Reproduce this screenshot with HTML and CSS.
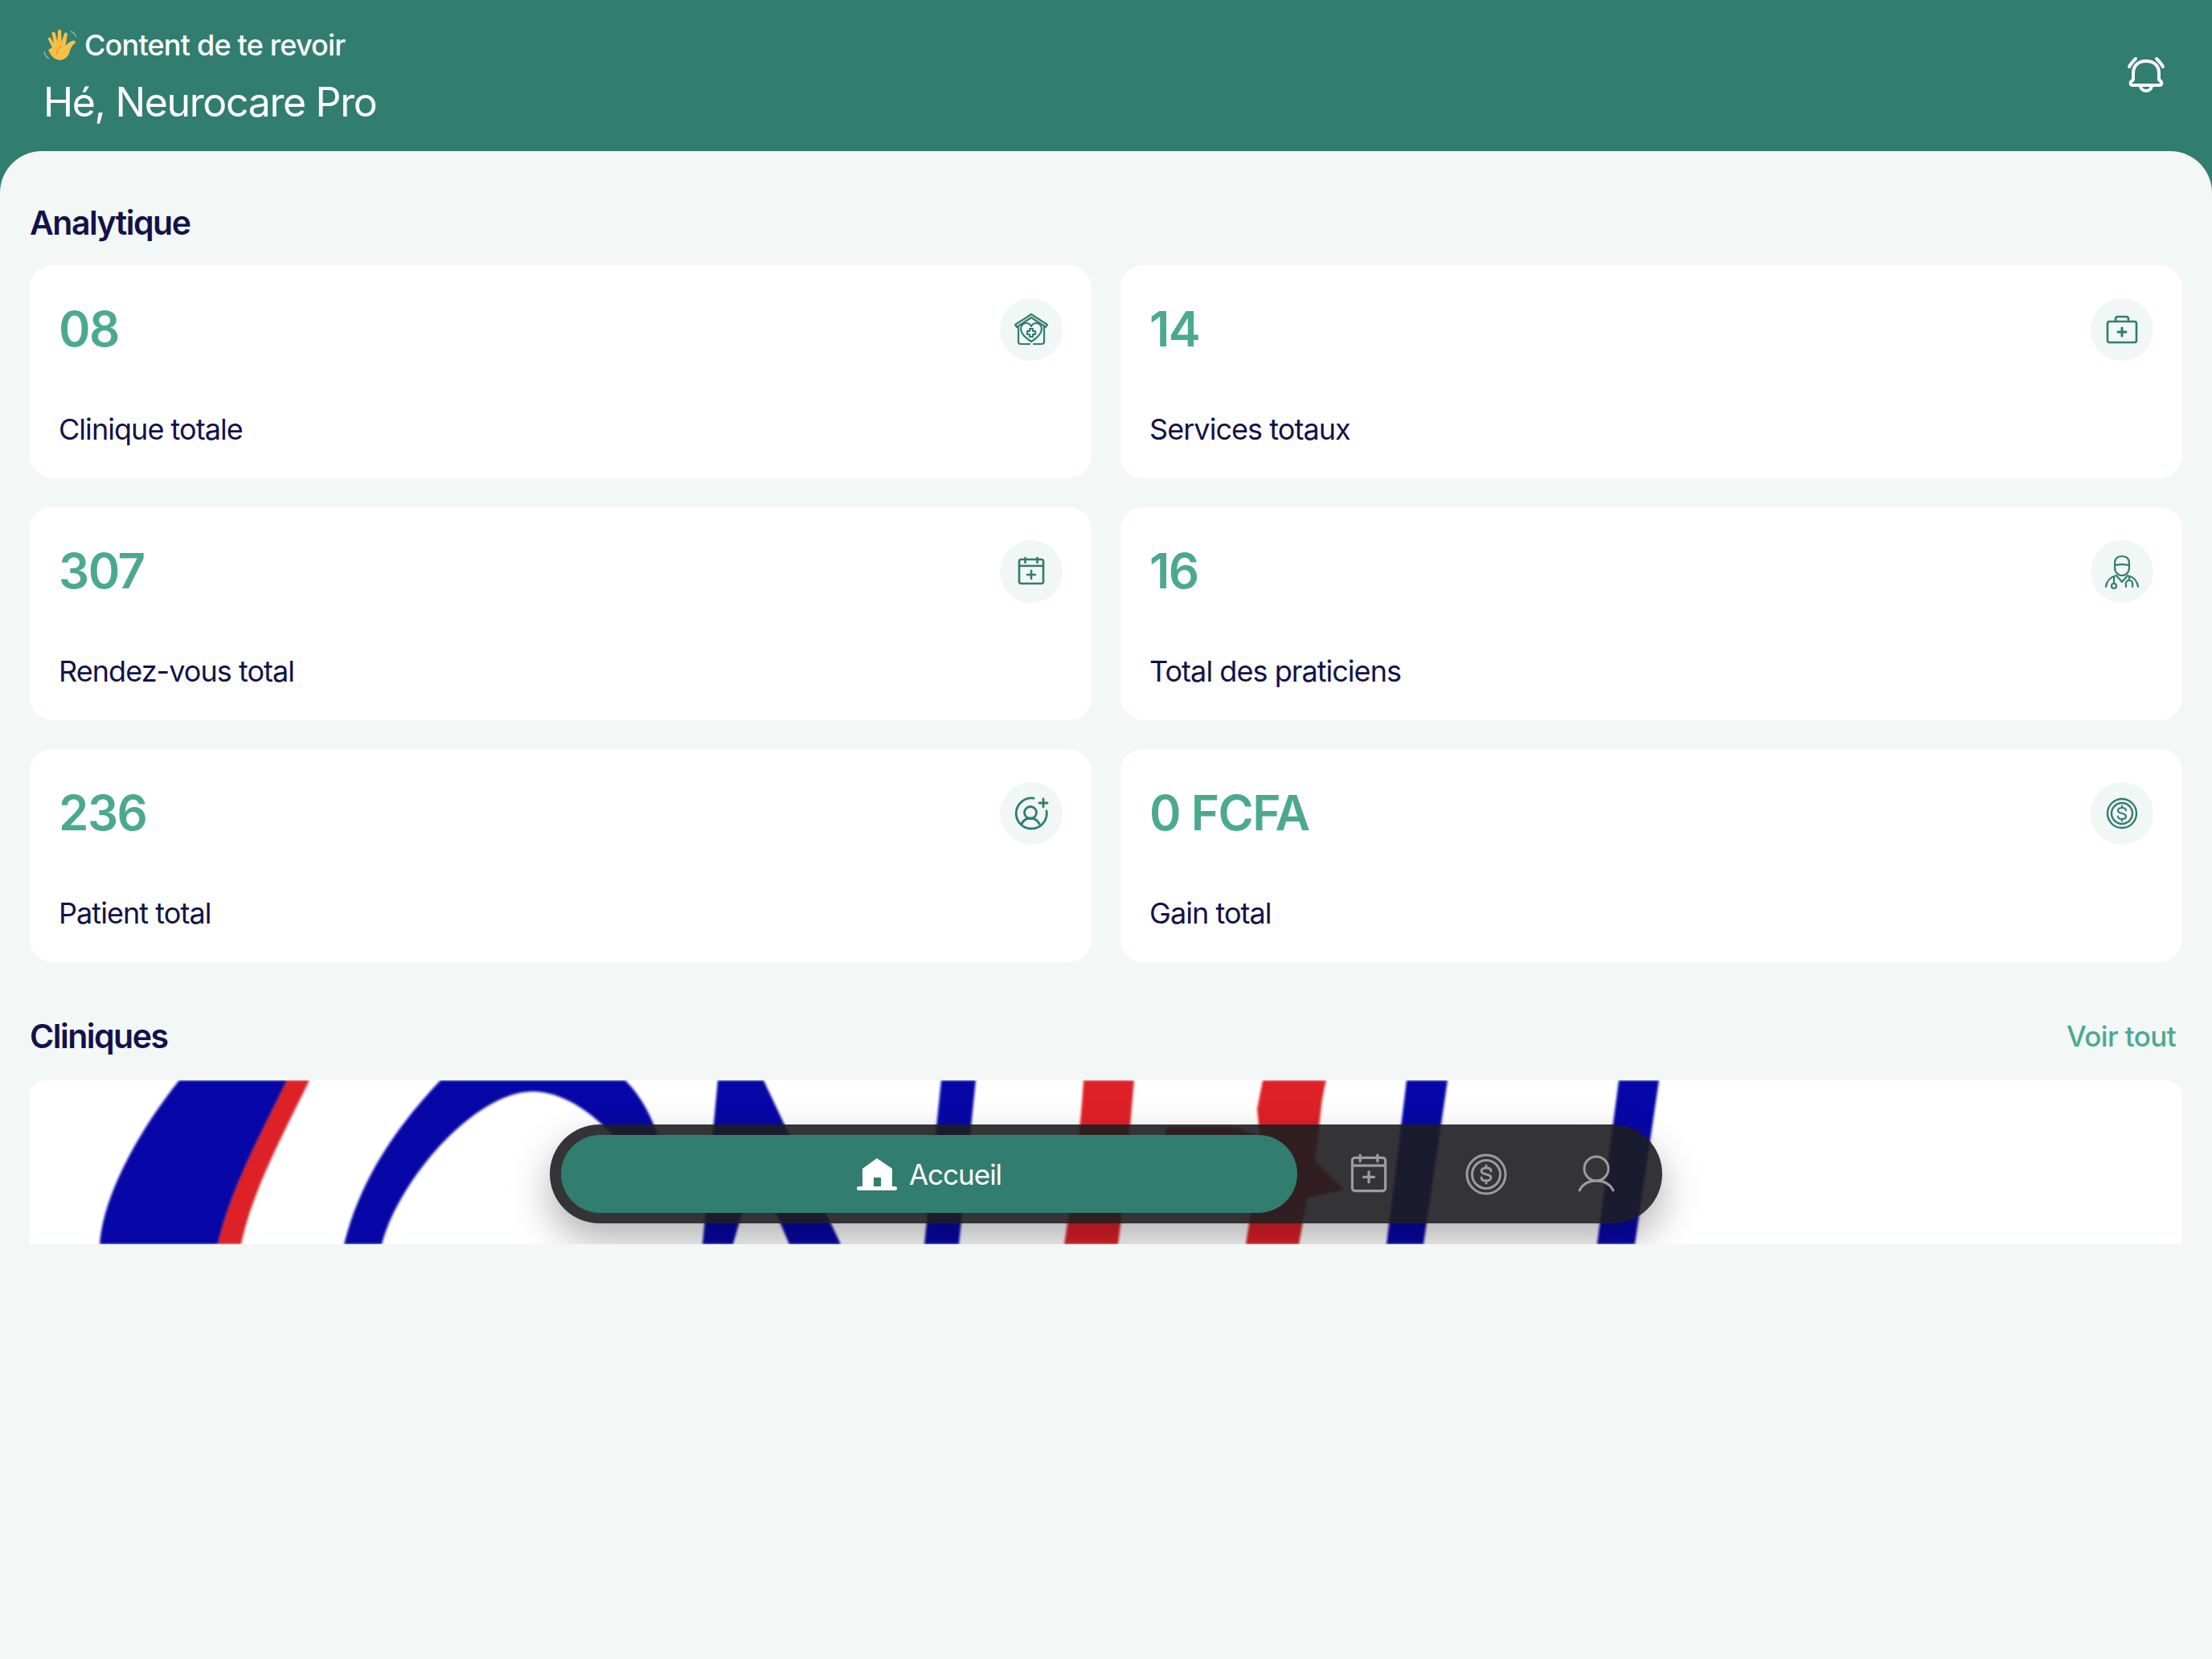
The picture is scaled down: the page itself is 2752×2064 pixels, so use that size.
FILE: index.html
```html
<!DOCTYPE html>
<html lang="fr">

<head>
  <meta charset="UTF-8">
  <meta name="viewport" content="width=device-width, initial-scale=1.0">
  <title>Accueil</title>
  <link rel="stylesheet" href="styles.css">
</head>

<body>
  <div class="app">
    <header class="header">
      <div class="greeting">
        <div class="greeting-top">
          <svg class="wave" viewBox="0 0 43 40" aria-hidden="true">
            <path d="M11 23 L6 13 C5 10.500 8.500 9.500 9.500 12 L13 18 L10.500 6 C10 3 14 2.500 14.800 5.500 L17.500 16 L18 3 C18 0 22.200 0 22.200 3 L22.500 16 L26 6 C27 3.500 30.500 4.500 29.800 7.500 L27.500 21 C29.500 18.500 33 15.500 37 14.500 C40 14 41 16.500 38.500 18.500 C35 21 33.500 25 32.500 29 C30.500 36.500 23 40.500 16.500 38 C11 36 8.500 31 6.500 27 C6 25.500 8.500 24 11 23 Z" fill="#f6bf47" />
            <path d="M23 22 C18 23 16 27 17 32" fill="none" stroke="#e39b2b" stroke-width="1.500" />
            <path d="M34 3 C37 4 39.500 6.500 40.500 10 M1 28 C1.500 32 3.500 35 7 37" fill="none" stroke="#a9c7bf" stroke-width="1.200" />
          </svg>
          <span>Content de te revoir</span>
        </div>
        <h1 class="greeting-name">Hé, Neurocare Pro</h1>
      </div>
      <svg class="bell" viewBox="0 0 52 52" fill="none" stroke="#fff" stroke-width="4" stroke-linecap="round" stroke-linejoin="round" aria-hidden="true">
        <path d="M5 17 C7 13 10 10 13 7 M47 17 C45 13 42 10 39 7" />
        <path d="M10 33 V25 C10 15 17 10 26 10 C35 10 42 15 42 25 V33 L45 36 C46 38 45 40 43 40 H9 C7 40 6 38 7 36 Z" />
        <path d="M19 41 C20 49 32 49 33 41" />
      </svg>
    </header>

    <main class="content">
      <h2 class="section-title analytics-title">Analytique</h2>
      <section class="stats">
        <article class="stat-card">
          <div class="stat-top">
            <span class="stat-value">08</span>
            <span class="stat-icon">
              <svg viewBox="-24 -24 48 48" aria-hidden="true">
                <path d="M-20 -6 L0 -19 L20 -6 L18 -3 L0 -15 L-18 -3 Z" />
                <path d="M-16 -3 V15 C-16 17 -15 18 -13 18 H-2 M3 18 H13 C15 18 16 17 16 15 V-3" />
                <path d="M0 15 C-8 10 -13 5 -13 -1 C-13 -6 -9 -8 -6 -8 C-3 -8 -1 -6 0 -4 C1 -6 3 -8 6 -8 C9 -8 13 -6 13 -1 C13 5 8 10 0 15 Z" />
                <path d="M-2 -1 H2 V2 H5 V6 H2 V9 H-2 V6 H-5 V2 H-2 Z" />
              </svg>
            </span>
          </div>
          <p class="stat-label">Clinique totale</p>
        </article>
        <article class="stat-card">
          <div class="stat-top">
            <span class="stat-value">14</span>
            <span class="stat-icon">
              <svg viewBox="-24 -24 48 48" aria-hidden="true">
                <rect x="-18" y="-10" width="36" height="26" rx="2.500" stroke-width="2.600" />
                <path d="M-8 -10 V-13 C-8 -15 -7 -16 -5 -16 H5 C7 -16 8 -15 8 -13 V-10" stroke-width="2.600" />
                <path d="M0 -2 V8 M-5 3 H5" stroke-width="3" />
              </svg>
            </span>
          </div>
          <p class="stat-label">Services totaux</p>
        </article>
        <article class="stat-card">
          <div class="stat-top">
            <span class="stat-value">307</span>
            <span class="stat-icon">
              <svg viewBox="-24 -24 48 48" aria-hidden="true">
                <rect x="-15" y="-15" width="30" height="30" rx="2.500" stroke-width="2.600" />
                <path d="M-15 -7 H15 M-7.500 -17 V-11 M7.500 -17 V-11 M0 -1 V9 M-5 4 H5" stroke-width="2.600" />
              </svg>
            </span>
          </div>
          <p class="stat-label">Rendez-vous total</p>
        </article>
        <article class="stat-card">
          <div class="stat-top">
            <span class="stat-value">16</span>
            <span class="stat-icon">
              <svg viewBox="-24 -24 48 48" aria-hidden="true">
                <path d="M-9 -10 C-9 -17 -5 -19 0 -19 C5 -19 9 -17 9 -10 C9 -9 8 -8 7 -8 C3 -9 -3 -9 -7 -8 C-8 -8 -9 -9 -9 -10 Z" />
                <path d="M-9 -9 V-5 C-9 1 -5 5 0 5 C5 5 9 1 9 -5 V-9" />
                <path d="M-20 19 C-19 11 -15 7 -7 5 L0 13 L7 5 C15 7 19 11 20 19" />
                <circle cx="-10" cy="18" r="3" />
                <path d="M-10 15 V7 M5 19 C4 13 6 11 9 11 C12 11 14 13 13 19 M9 11 V6" />
              </svg>
            </span>
          </div>
          <p class="stat-label">Total des praticiens</p>
        </article>
        <article class="stat-card">
          <div class="stat-top">
            <span class="stat-value">236</span>
            <span class="stat-icon">
              <svg viewBox="-24 -24 48 48" aria-hidden="true">
                <path d="M3 -18.800 A19 19 0 1 0 19 -3" stroke-width="2.800" />
                <path d="M15 -18 V-8 M10 -13 H20" stroke-width="2.800" />
                <circle cx="-1" cy="-1" r="7.500" stroke-width="2.800" />
                <path d="M-12 13 C-9 7 -5 6 -1 6 C3 6 7 7 10 13" stroke-width="2.800" />
              </svg>
            </span>
          </div>
          <p class="stat-label">Patient total</p>
        </article>
        <article class="stat-card">
          <div class="stat-top">
            <span class="stat-value">0 FCFA</span>
            <span class="stat-icon">
              <svg viewBox="-24 -24 48 48" aria-hidden="true">
                <circle r="18" stroke-width="2.400" />
                <circle r="13" stroke-width="2.400" />
                <path d="M5 -3.500 C5 -6 3 -7 0 -7 C-3 -7 -5 -5.500 -5 -3.500 C-5 1 5 -1 5 3.500 C5 5.500 3 7 0 7 C-3 7 -5 6 -5 3.500 M0 -9.500 V-7 M0 7 V9.500" />
              </svg>
            </span>
          </div>
          <p class="stat-label">Gain total</p>
        </article>
      </section>

      <div class="section-head">
        <h2 class="section-title">Cliniques</h2>
        <a class="see-all">Voir tout</a>
      </div>

      <section class="clinic-card">
        <svg class="clinic-logo" viewBox="37 1344 2678 204" preserveAspectRatio="none" aria-hidden="true">
          <g fill="#0707a8">
            <path d="M223 1344 H357 C330 1400 286 1480 271 1548 H124 C128 1490 170 1410 223 1344 Z" />
            <path d="M428 1548 C450 1460 500 1395 548 1344 H778 C795 1362 808 1380 825 1430 L785 1440 C745 1385 700 1358 663 1358 C590 1358 495 1470 475 1548 Z" />
            <path d="M893 1344 H950 L1046 1548 H982 L940 1450 L912 1548 H874 Z" />
            <path d="M1171 1344 H1214 L1193 1548 H1150 Z" />
            <path d="M1750 1344 H1801 L1771 1548 H1725 Z" />
            <path d="M2014 1344 H2064 L2034 1548 H1987 Z" />
          </g>
          <g fill="#de2027">
            <path d="M357 1344 H385 C358 1400 314 1480 300 1548 H271 C286 1480 330 1400 357 1344 Z" />
            <path d="M1348 1344 H1411 C1406 1400 1400 1480 1391 1548 H1324 C1335 1480 1345 1400 1348 1344 Z" />
            <path d="M1571 1344 H1650 C1640 1380 1643 1420 1630 1470 L1616 1548 H1550 C1560 1480 1572 1440 1564 1380 Z" />
            <path d="M1450 1402 H1535 L1625 1433 L1672 1480 L1630 1490 L1450 1440 Z" />
          </g>
        </svg>

        <nav class="tabbar">
          <a class="tab-active">
            <svg viewBox="0 0 50 40" aria-hidden="true">
              <path fill="#fff" fill-rule="evenodd" d="M7 35 V13 L25 0 L44 13 V35 H30 V24 H21 V35 Z" />
              <rect x="0" y="35" width="50" height="5" rx="2.500" fill="#fff" />
            </svg>
            <span>Accueil</span>
          </a>
          <div class="tab-icons">
            <svg viewBox="-24 -24 48 48" aria-hidden="true">
              <rect x="-19" y="-19" width="38" height="38" rx="3" />
              <path d="M-19 -10 H19 M-10 -22 V-15 M10 -22 V-15 M0 -3 V9 M-6 3 H6" />
            </svg>
            <svg viewBox="-26 -26 52 52" aria-hidden="true">
              <circle r="24" />
              <circle r="17.500" />
              <path d="M6 -4 C6 -7 3 -8 0 -8 C-3 -8 -6 -6.500 -6 -4 C-6 1 6 -1 6 4 C6 6.500 3 8 0 8 C-3 8 -6 7 -6 4 M0 -11 V-8 M0 8 V11" />
            </svg>
            <svg viewBox="-26 -26 52 52" aria-hidden="true">
              <circle cy="-7" r="15" />
              <path d="M-21 20 C-17 12 -10 8 0 8 C10 8 17 12 21 20" />
            </svg>
          </div>
        </nav>
      </section>
    </main>
  </div>
</body>

</html>
```

FILE: styles.css
```css
* {
  margin: 0;
  padding: 0;
  box-sizing: border-box;
}

body {
  font-family: Inter, "Liberation Sans", sans-serif;
  background-color: #F3F7F6;
}

.app {
  min-height: 100vh;
  display: flex;
  flex-direction: column;
  background-color: #317D6F;
}

.header {
  height: 188px;
  display: flex;
  align-items: flex-start;
  justify-content: space-between;
  padding: 34px 56px 0 54px;
  color: #fff;
}

.greeting-top {
  display: flex;
  align-items: center;
  gap: 8px;
  font-size: 36px;
  font-weight: 500;
  line-height: 44px;
  letter-spacing: -0.8px;
}

.wave {
  width: 43px;
  height: 40px;
}

.greeting-name {
  margin-top: 19px;
  font-size: 50px;
  font-weight: 400;
  line-height: 60px;
  letter-spacing: -1.35px;
}

.bell {
  width: 52px;
  height: 52px;
  margin-top: 32px;
}

.content {
  flex: 1;
  padding: 0 37px;
  background-color: #F3F7F6;
  border-radius: 52px 52px 0 0;
}

.section-title {
  font-size: 41px;
  font-weight: 600;
  line-height: 52px;
  letter-spacing: -1.5px;
  color: #12124A;
}

.analytics-title {
  padding-top: 63px;
  height: 142px;
}

.stats {
  display: grid;
  grid-template-columns: 1fr 1fr;
  gap: 36px;
}

.stat-card {
  height: 265px;
  padding: 40px 36px 0;
  background-color: #fff;
  border-radius: 28px;
}

.stat-top {
  display: flex;
  align-items: center;
  justify-content: space-between;
  height: 80px;
}

.stat-value {
  margin-top: -3px;
  font-size: 60px;
  font-weight: 600;
  letter-spacing: -1.5px;
  color: #4BAA8D;
}

.stat-icon {
  width: 78px;
  height: 78px;
  display: flex;
  align-items: center;
  justify-content: center;
  background-color: #F0F7F5;
  border-radius: 50%;
}

.stat-icon svg {
  width: 48px;
  height: 48px;
  fill: none;
  stroke: #317D6F;
  stroke-width: 2.200;
  stroke-linecap: round;
  stroke-linejoin: round;
}

.stat-label {
  margin-top: 62px;
  font-size: 36px;
  line-height: 44px;
  letter-spacing: -0.95px;
  color: #12124A;
}

.section-head {
  display: flex;
  align-items: center;
  justify-content: space-between;
  height: 147px;
  padding-top: 37px;
}

.see-all {
  margin-right: 8px;
  font-size: 35px;
  font-weight: 500;
  letter-spacing: -0.6px;
  color: #4BAA8D;
}

.clinic-card {
  position: relative;
  height: 204px;
  overflow: hidden;
  background-color: #fff;
  border-radius: 20px 20px 0 0;
}

.clinic-logo {
  display: block;
  width: 100%;
  height: 100%;
  filter: blur(1.500px);
}

.tabbar {
  position: absolute;
  top: 55px;
  left: 50%;
  width: 1384px;
  height: 123px;
  transform: translateX(-50%);
  display: flex;
  align-items: center;
  padding: 0 14px;
  background-color: rgba(30, 30, 33, 0.9);
  border-radius: 62px;
  box-shadow: 0 22px 50px rgba(0, 0, 0, 0.3);
}

.tab-active {
  width: 916px;
  height: 97px;
  display: flex;
  align-items: center;
  justify-content: center;
  gap: 15px;
  font-size: 35px;
  letter-spacing: -1px;
  color: #fff;
  background-color: #317D6F;
  border-radius: 49px;
}

.tab-active svg {
  width: 50px;
  height: 40px;
}

.tab-icons {
  display: grid;
  grid-template-columns: 146px 146px 128px;
  justify-items: center;
  align-items: center;
  margin-left: 16px;
}

.tab-icons svg {
  width: 52px;
  height: 52px;
  fill: none;
  stroke: #9C9C9C;
  stroke-width: 3;
  stroke-linecap: round;
  stroke-linejoin: round;
}
```
